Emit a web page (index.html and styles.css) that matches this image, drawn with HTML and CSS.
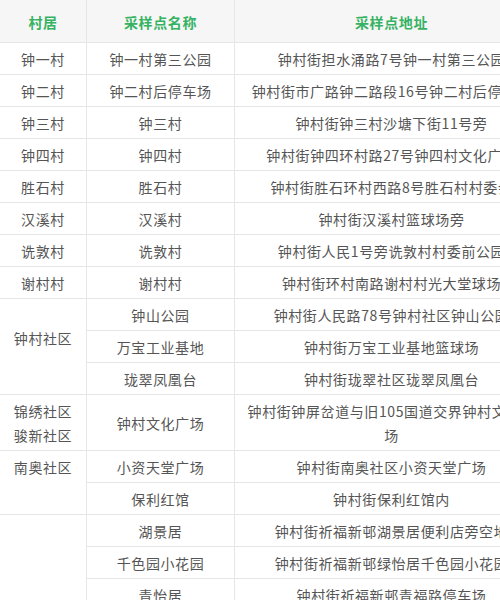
FILE: index.html
```html
<!DOCTYPE html>
<html lang="zh-CN">
<head>
<meta charset="utf-8">
<title>采样点</title>
<link rel="stylesheet" href="styles.css">
</head>
<body>
<table class="sites">
  <colgroup>
    <col class="c-village">
    <col class="c-name">
    <col class="c-addr">
  </colgroup>
  <thead>
    <tr><th>村居</th><th>采样点名称</th><th>采样点地址</th></tr>
  </thead>
  <tbody>
    <tr><td>钟一村</td><td>钟一村第三公园</td><td>钟村街担水涌路7号钟一村第三公园</td></tr>
    <tr><td>钟二村</td><td>钟二村后停车场</td><td>钟村街市广路钟二路段16号钟二村后停车场</td></tr>
    <tr><td>钟三村</td><td>钟三村</td><td>钟村街钟三村沙塘下街11号旁</td></tr>
    <tr><td>钟四村</td><td>钟四村</td><td>钟村街钟四环村路27号钟四村文化广场</td></tr>
    <tr><td>胜石村</td><td>胜石村</td><td>钟村街胜石环村西路8号胜石村村委会</td></tr>
    <tr><td>汉溪村</td><td>汉溪村</td><td>钟村街汉溪村篮球场旁</td></tr>
    <tr><td>诜敦村</td><td>诜敦村</td><td>钟村街人民1号旁诜敦村村委前公园</td></tr>
    <tr><td>谢村村</td><td>谢村村</td><td>钟村街环村南路谢村村光大堂球场</td></tr>
    <tr><td rowspan="3" class="raised">钟村社区</td><td>钟山公园</td><td>钟村街人民路78号钟村社区钟山公园</td></tr>
    <tr><td>万宝工业基地</td><td>钟村街万宝工业基地篮球场</td></tr>
    <tr><td>珑翠凤凰台</td><td>钟村街珑翠社区珑翠凤凰台</td></tr>
    <tr><td>锦绣社区<br>骏新社区</td><td>钟村文化广场</td><td>钟村街钟屏岔道与旧105国道交界钟村文化广场</td></tr>
    <tr><td rowspan="2" class="top">南奥社区</td><td>小资天堂广场</td><td>钟村街南奥社区小资天堂广场</td></tr>
    <tr><td>保利红馆</td><td>钟村街保利红馆内</td></tr>
    <tr><td rowspan="4"></td><td>湖景居</td><td>钟村街祈福新邨湖景居便利店旁空地</td></tr>
    <tr><td>千色园小花园</td><td>钟村街祈福新邨绿怡居千色园小花园</td></tr>
    <tr><td>青怡居</td><td>钟村街祈福新邨青福路停车场</td></tr>
    <tr><td>祈福新邨</td><td>钟村街祈福新邨会所旁</td></tr>
  </tbody>
</table>
</body>
</html>
```
FILE: styles.css
```css
html, body {
  margin: 0;
  padding: 0;
  background: #ffffff;
  overflow: hidden;
}

.sites {
  border-collapse: collapse;
  table-layout: fixed;
  width: 549px;
  margin-left: -1px;
  margin-top: -1px;
  font-family: "Noto Sans CJK SC", "Microsoft YaHei", sans-serif;
  font-size: 14px;
  letter-spacing: 0.6px;
  color: #555555;
}

.c-village { width: 87px; }
.c-name { width: 148px; }
.c-addr { width: 314px; }

.sites th,
.sites td {
  border: 1px solid #e6e6e6;
  text-align: center;
  vertical-align: middle;
  line-height: 24px;
  padding: 4px 8px 3px;
  font-weight: normal;
}

.sites th {
  background: #f6f6f6;
  color: #35b262;
  font-weight: bold;
  padding: 10px 8px 8px;
}

.sites td.raised {
  padding-bottom: 21px;
}

.sites td.top {
  vertical-align: top;
}
```
